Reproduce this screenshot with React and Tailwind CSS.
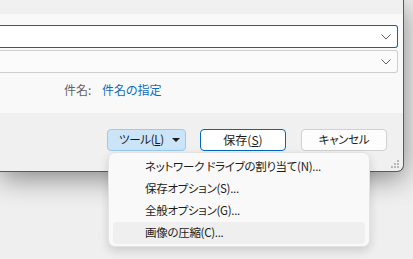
const font = { fontFamily: '"Noto Sans CJK JP", "Noto Sans", sans-serif' };

function Chevron() {
  return (
    <svg width="10" height="6" viewBox="0 0 10 6" className="text-[#5f5f5f]">
      <path d="M0.5 0.5 L5 5 L9.5 0.5" fill="none" stroke="currentColor" strokeWidth="1" />
    </svg>
  );
}

function Combo({ focused }) {
  return (
    <div
      className={`flex h-[23px] w-[398px] items-center justify-end rounded-r-[3px] border border-l-0 pr-[6px] ${
        focused ? "border-[#0067c0] bg-white" : "border-[#cdcdcd] bg-[#fbfbfb]"
      }`}
    >
      <Chevron />
    </div>
  );
}

function Grip() {
  return (
    <svg width="8" height="8" viewBox="0 0 8 8" className="absolute bottom-[3px] right-[4px]">
      {[
        [6, 0],
        [3, 3],
        [6, 3],
        [0, 6],
        [3, 6],
        [6, 6],
      ].map(([x, y]) => (
        <rect key={`${x}-${y}`} x={x} y={y} width="2" height="2" fill="#b8b8b8" />
      ))}
    </svg>
  );
}

const items = [
  "ネットワーク ドライブの割り当て(N)...",
  "保存オプション(S)...",
  "全般オプション(G)...",
  "画像の圧縮(C)...",
];

export default function App() {
  return (
    <div
      className="relative h-[259px] w-[413px] overflow-hidden bg-[#efefef] text-[12px] text-[#1b1b1b] [font-feature-settings:'palt']"
      style={font}
    >
      <div className="relative h-[172px] w-[404px] rounded-br-[7px] border-b border-r border-[#5a5a5a] bg-[#f0f0f0] shadow-[0_6px_28px_rgba(0,0,0,0.45)]">
        <div className="h-[14px]" />
        <div className="flex h-[99px] flex-col gap-[2px] bg-[#f9f9f9] pt-[11px]">
          <Combo focused />
          <Combo />
          <div className="mt-[7px] flex items-center pl-[64px] leading-[16px]">
            <span className="w-[38px] text-[#616161]">件名:</span>
            <span className="text-[#0f6cbd]">件名の指定</span>
          </div>
        </div>
        <div className="flex gap-[14px] pl-[107px] pt-[16px] text-[11.5px] tracking-[-0.3px]">
          <div className="flex h-[22px] w-[79px] items-center whitespace-nowrap rounded-[4px] border border-[#99cbf1] bg-[#cce4f7] pl-[11px]">
            <span>
              ツール(<span className="underline">L</span>)
            </span>
            <svg width="8" height="4" viewBox="0 0 8 4" className="ml-auto mr-[5px]">
              <path d="M0 0 H8 L4 4 Z" fill="#1b1b1b" />
            </svg>
          </div>
          <div className="flex h-[22px] w-[86px] items-center justify-center whitespace-nowrap rounded-[4px] border border-[#0067c0] bg-white text-[12px] tracking-normal">
            保存(<span className="underline">S</span>)
          </div>
          <div className="ml-[1px] flex h-[22px] w-[86px] items-center justify-center whitespace-nowrap rounded-[4px] border border-[#d1d1d1] bg-[#fdfdfd]">
            キャンセル
          </div>
        </div>
        <Grip />
      </div>

      <div className="absolute left-[108px] top-[152px] w-[262px] rounded-[7px] border border-[#e3e3e3] bg-[#f9f9f9] px-[4px] pb-[2px] pt-[3px] text-[11.5px] tracking-[-0.3px] shadow-[0_4px_10px_rgba(0,0,0,0.14)]">
        {items.map((label, i) => (
          <div
            key={label}
            className={`flex h-[22px] items-center whitespace-nowrap rounded-[4px] pl-[32px] ${i === 3 ? "bg-[#efefef]" : ""}`}
          >
            {label}
          </div>
        ))}
      </div>
    </div>
  );
}
